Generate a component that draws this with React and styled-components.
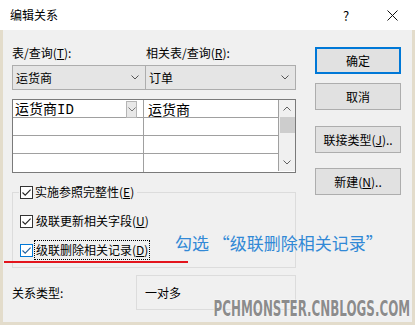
import React from 'react';
import styled, { createGlobalStyle } from 'styled-components';

const Global = createGlobalStyle`
  html, body { margin: 0; padding: 0; background: #fff; }
  body {
    font-family: "Noto Sans CJK SC", "Noto Sans", sans-serif;
    font-size: 12px;
    color: #000;
  }
  * { box-sizing: border-box; }
`;

const Window = styled.div`
  position: relative;
  width: 415px;
  height: 325px;
  display: flex;
  flex-direction: column;
  overflow: hidden;
`;

const TitleBar = styled.div`
  height: 30px;
  flex: none;
  background: #fff;
  display: flex;
  align-items: center;
`;

const Title = styled.div`
  flex: 1;
  padding-left: 10px;
  font-size: 12px;
  line-height: 16px;
`;

const CaptionBtn = styled.div`
  width: 46px;
  height: 30px;
  display: flex;
  align-items: center;
  justify-content: center;
  font-size: 13px;
`;

const Body = styled.div`
  flex: 1;
  background: #f0f0f0;
  border: 3px solid #e3dccb;
  border-top: none;
  display: flex;
`;

const Main = styled.div`
  width: 284px;
  margin-left: 9px;
  display: flex;
  flex-direction: column;
`;

const TwoCols = styled.div`
  display: grid;
  grid-template-columns: 134px 150px;
`;

const Labels = styled(TwoCols)`
  margin-top: 15px;
  height: 20px;
  line-height: 16px;
`;

const Combo = styled.div`
  height: 25px;
  border: 1px solid #adadad;
  background: #e5e5e5;
  display: flex;
  align-items: center;
  justify-content: space-between;
  padding: 0 6px 0 3px;
  margin-left: ${p => (p.$joined ? '-1px' : '0')};
`;

const Chevron = ({ up, color = '#555' }) => (
  <svg width="8" height="5" viewBox="0 0 8 5">
    <path
      d={up ? 'M0.5 4.5 L4 1 L7.5 4.5' : 'M0.5 0.5 L4 4 L7.5 0.5'}
      fill="none"
      stroke={color}
      strokeWidth="1"
    />
  </svg>
);

const Grid = styled.div`
  margin-top: 9px;
  border: 1px solid #7a7a7a;
  background: #fff;
  display: flex;
`;

const Table = styled.div`
  flex: 1;
  display: flex;
  flex-direction: column;
`;

const Row = styled.div`
  display: grid;
  grid-template-columns: 131px 134px;
  height: 18px;
  border-bottom: ${p => (p.$last ? 'none' : '1px solid #a0a0a0')};
`;

const Cell = styled.div`
  display: flex;
  align-items: center;
  padding-left: ${p => (p.$first ? '2px' : '4px')};
  padding-right: 6px;
  border-right: ${p => (p.$first ? '1px solid #a0a0a0' : 'none')};
  font-size: 14px;
  line-height: 17px;
  white-space: nowrap;
`;

const CellText = styled.span`
  flex: 1;
`;

const Mono = styled.span`
  font-family: "Liberation Mono", monospace;
`;

const CellDrop = styled.div`
  width: 11px;
  height: 17px;
  background: #e8e8e8;
  border: 1px solid #b5b5b5;
  display: flex;
  align-items: center;
  justify-content: center;
`;

const ScrollBar = styled.div`
  width: 17px;
  height: 71px;
  border-left: 1px solid #a0a0a0;
  background: #f0f0f0;
  display: flex;
  flex-direction: column;
  align-items: center;
`;

const ScrollArrow = styled.div`
  height: 17px;
  width: 100%;
  display: flex;
  align-items: center;
  justify-content: center;
`;

const ScrollSpace = styled.div`
  flex: 1;
`;

const Thumb = styled.div`
  width: 15px;
  height: 16px;
  background: #cdcdcd;
`;

const Group = styled.fieldset`
  margin: 12px 0 0 0;
  padding: 0 0 7px 6px;
  border: 1px solid #dcdcdc;
  min-inline-size: 0;
`;

const Legend = styled.legend`
  padding: 0 1px;
  margin: 0;
  height: 14px;
  display: flex;
  align-items: center;
`;

const CheckRow = styled.div`
  display: flex;
  align-items: center;
  gap: 1px;
  height: 20px;
  margin-top: ${p => p.$mt || 0}px;
  padding-left: 1px;
`;

const Box = styled.div`
  width: 13px;
  height: 13px;
  flex: none;
  background: #fff;
  border: 1px solid ${p => (p.$focus ? '#0078d7' : '#333')};
  display: flex;
  align-items: center;
  justify-content: center;
`;

const CheckLabel = styled.span`
  border: 1px dotted ${p => (p.$focus ? '#000' : 'transparent')};
  padding: 0 1px;
  line-height: 18px;
  white-space: nowrap;
`;

const Check = ({ focus }) => (
  <Box $focus={focus}>
    <svg width="11" height="11" viewBox="0 0 11 11">
      <path
        d="M1.5 5.5 L4.2 8.2 L9.6 2.6"
        fill="none"
        stroke={focus ? '#1f5e9c' : '#222'}
        strokeWidth="1.1"
      />
    </svg>
  </Box>
);

const RelRow = styled.div`
  margin-top: 7px;
  display: flex;
  align-items: center;
`;

const RelLabel = styled.div`
  width: 124px;
`;

const RelBox = styled.div`
  width: 160px;
  height: 35px;
  border: 1px solid #dcdcdc;
  display: flex;
  align-items: center;
  padding-left: 8px;
`;

const ButtonCol = styled.div`
  width: 86px;
  margin-left: 19px;
  display: flex;
  flex-direction: column;
  padding-top: 17px;
`;

const Button = styled.div`
  height: 27px;
  margin-top: ${p => p.$mt || 0}px;
  background: #e1e1e1;
  border: ${p => (p.$default ? '2px solid #0078d7' : '1px solid #adadad')};
  display: flex;
  align-items: center;
  justify-content: center;
  white-space: nowrap;
`;

const RedLine = styled.div`
  position: absolute;
  left: 4px;
  top: 261px;
  width: 184px;
  height: 2px;
  background: #e3141c;
`;

const Note = styled.div`
  position: absolute;
  left: 175px;
  top: 232px;
  font-size: 17px;
  line-height: 22px;
  color: #3289d6;
  white-space: nowrap;
`;

const Watermark = styled.div`
  position: absolute;
  right: 5px;
  bottom: 5px;
  font-family: "Liberation Sans Narrow", "DejaVu Sans Condensed", sans-serif;
  font-weight: bold;
  font-size: 21px;
  line-height: 22px;
  color: #8c8c8c;
  text-shadow: 0 0 2px #fff, 0 0 1px #fff;
  transform: scaleX(0.63);
  transform-origin: right center;
  white-space: nowrap;
`;

const rows = [
  ['运货商', 'ID', '运货商'],
  ['', '', ''],
  ['', '', ''],
  ['', '', ''],
];

export default function App() {
  return (
    <>
      <Global />
      <Window>
        <TitleBar>
          <Title>编辑关系</Title>
          <CaptionBtn>?</CaptionBtn>
          <CaptionBtn>
            <svg width="11" height="11" viewBox="0 0 11 11">
              <path d="M0.5 0.5 L10.5 10.5 M10.5 0.5 L0.5 10.5" stroke="#111" strokeWidth="1" />
            </svg>
          </CaptionBtn>
        </TitleBar>
        <Body>
          <Main>
            <Labels>
              <span>表/查询(<u>T</u>):</span>
              <span>相关表/查询(<u>R</u>):</span>
            </Labels>
            <TwoCols>
              <Combo>
                <span>运货商</span>
                <Chevron />
              </Combo>
              <Combo $joined>
                <span>订单</span>
                <Chevron />
              </Combo>
            </TwoCols>
            <Grid>
              <Table>
                {rows.map((r, i) => (
                  <Row key={i} $last={i === rows.length - 1}>
                    <Cell $first>
                      <CellText>
                        {r[0]}
                        {r[1] && <Mono>{r[1]}</Mono>}
                      </CellText>
                      {i === 0 && (
                        <CellDrop>
                          <Chevron color="#777" />
                        </CellDrop>
                      )}
                    </Cell>
                    <Cell>{r[2]}</Cell>
                  </Row>
                ))}
              </Table>
              <ScrollBar>
                <ScrollArrow>
                  <Chevron up color="#606060" />
                </ScrollArrow>
                <Thumb />
                <ScrollSpace />
                <ScrollArrow>
                  <Chevron color="#606060" />
                </ScrollArrow>
              </ScrollBar>
            </Grid>
            <Group>
              <Legend>
                <Check />
                <CheckLabel>实施参照完整性(<u>E</u>)</CheckLabel>
              </Legend>
              <CheckRow $mt={12}>
                <Check />
                <CheckLabel>级联更新相关字段(<u>U</u>)</CheckLabel>
              </CheckRow>
              <CheckRow $mt={9}>
                <Check focus />
                <CheckLabel $focus>级联删除相关记录(<u>D</u>)</CheckLabel>
              </CheckRow>
            </Group>
            <RelRow>
              <RelLabel>关系类型:</RelLabel>
              <RelBox>一对多</RelBox>
            </RelRow>
          </Main>
          <ButtonCol>
            <Button $default>确定</Button>
            <Button $mt={9}>取消</Button>
            <Button $mt={16}>联接类型(<u>J</u>)..</Button>
            <Button $mt={15}>新建(<u>N</u>)..</Button>
          </ButtonCol>
        </Body>
        <RedLine />
        <Note>勾选 “级联删除相关记录”</Note>
        <Watermark>PCHMONSTER.CNBLOGS.COM</Watermark>
      </Window>
    </>
  );
}
